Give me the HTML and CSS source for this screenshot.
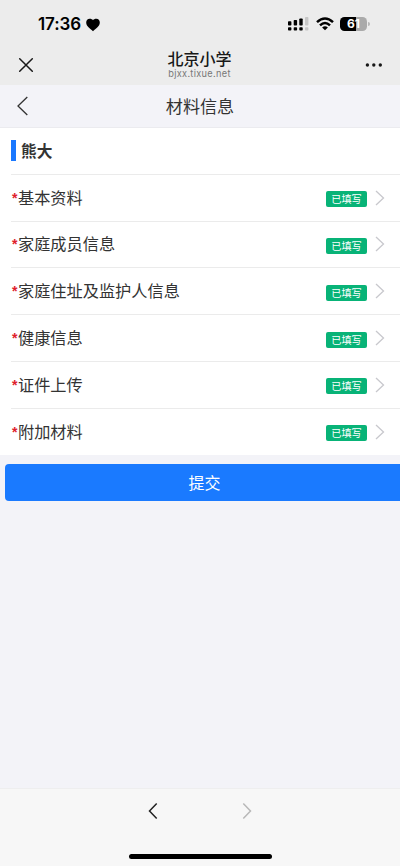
FILE: index.html
```html
<!DOCTYPE html>
<html lang="zh-CN">
<head>
<meta charset="utf-8">
<meta name="viewport" content="width=device-width, initial-scale=1">
<title>材料信息</title>
<link rel="stylesheet" href="styles.css">
</head>
<body>
<header class="top">
  <div class="status">
    <span class="time">17:36</span>
    <svg class="heart" width="14" height="14" viewBox="0 0 14 14"><path d="M7 13.2C3.5 10.5.2 8 .2 4.6.2 2.400 1.700.8 3.600.8 5.200.8 6.400 1.300 7 2.300 7.600 1.300 8.800.8 10.400.8c1.900 0 3.400 1.600 3.400 3.800C13.800 8 10.500 10.500 7 13.200z"/></svg>
    <svg class="signal" width="21" height="14" viewBox="0 0 21 14"><g><rect x="0" y="4.300" width="3.400" height="4.200" rx=".8"/><rect x="5.700" y="3" width="3.400" height="5.500" rx=".8"/><rect x="11.300" y="1.500" width="3.400" height="7" rx=".8"/><rect x="0" y="10.200" width="3.400" height="3.400" rx=".8"/><rect x="5.700" y="10.200" width="3.400" height="3.400" rx=".8"/><rect x="11.300" y="10.200" width="3.400" height="3.400" rx=".8"/></g><g fill="#c6c6c6"><rect x="17" y="0" width="3.400" height="8.500" rx=".8"/><rect x="17" y="10.200" width="3.400" height="3.400" rx=".8"/></g></svg>
    <svg class="wifi" width="18" height="14" viewBox="0 0 18 14"><g fill="none" stroke="#000" stroke-width="2.500"><path d="M1 5.200Q9-2.200 17 5.200"/><path d="M4 8.400Q9 3.700 14 8.400"/></g><path d="M9 13.200 6.100 10.400Q9 7.900 11.900 10.400z"/></svg>
    <div class="battery"><span class="level">61</span></div>
    <span class="cap"></span>
  </div>
  <div class="browser">
    <svg width="16" height="16" viewBox="0 0 16 16" fill="none" stroke="#181818" stroke-width="1.500" stroke-linecap="round"><path d="M1.700 1.700 14.300 14.300M14.300 1.700 1.700 14.300"/></svg>
    <div class="site"><div class="name">北京小学</div><div class="host">bjxx.tixue.net</div></div>
    <svg width="18" height="4" viewBox="0 0 18 4" fill="#181818"><circle cx="2.400" cy="2" r="1.700"/><circle cx="8.800" cy="2" r="1.700"/><circle cx="15.300" cy="2" r="1.700"/></svg>
  </div>
</header>
<nav class="title">
  <svg width="12" height="20" viewBox="0 0 12 20" fill="none" stroke="#333" stroke-width="1.300"><path d="M11.300 1 2 10l9.300 9"/></svg>
  <h1>材料信息</h1>
</nav>
<main>
  <section class="list">
    <div class="row person"><span class="bar"></span><h2>熊大</h2></div>
    <div class="row"><i>*</i><span class="label">基本资料</span><span class="tag">已填写</span><svg class="go" viewBox="0 0 10 16"><path d="M1 1l7.500 7L1 15"/></svg></div>
    <div class="row"><i>*</i><span class="label">家庭成员信息</span><span class="tag">已填写</span><svg class="go" viewBox="0 0 10 16"><path d="M1 1l7.500 7L1 15"/></svg></div>
    <div class="row"><i>*</i><span class="label">家庭住址及监护人信息</span><span class="tag">已填写</span><svg class="go" viewBox="0 0 10 16"><path d="M1 1l7.500 7L1 15"/></svg></div>
    <div class="row"><i>*</i><span class="label">健康信息</span><span class="tag">已填写</span><svg class="go" viewBox="0 0 10 16"><path d="M1 1l7.500 7L1 15"/></svg></div>
    <div class="row"><i>*</i><span class="label">证件上传</span><span class="tag">已填写</span><svg class="go" viewBox="0 0 10 16"><path d="M1 1l7.500 7L1 15"/></svg></div>
    <div class="row"><i>*</i><span class="label">附加材料</span><span class="tag">已填写</span><svg class="go" viewBox="0 0 10 16"><path d="M1 1l7.500 7L1 15"/></svg></div>
  </section>
  <button class="submit">提交</button>
</main>
<footer>
  <div class="history">
    <svg width="10" height="18" viewBox="0 0 10 18" fill="none" stroke="#222" stroke-width="1.500"><path d="M8.700 1.500 1.500 9l7.200 7.500"/></svg>
    <svg width="10" height="18" viewBox="0 0 10 18" fill="none" stroke="#b8b8b8" stroke-width="1.500"><path d="M1.300 1.500 8.500 9l-7.200 7.500"/></svg>
  </div>
  <div class="home"></div>
</footer>
</body>
</html>
```
FILE: styles.css
```css
* { box-sizing: border-box; }
body {
  margin: 0;
  height: 866px;
  display: flex;
  flex-direction: column;
  overflow: hidden;
  background: #f3f3f8;
  color: #333;
  font-family: "Liberation Sans", "Noto Sans CJK SC", sans-serif;
}
svg { display: block; flex: none; }
h1, h2 { margin: 0; }
.top { height: 85px; background: #ececec; flex: none; }
.status {
  display: flex;
  align-items: center;
  height: 45px;
  padding: 3px 0 0 38px;
}
.time {
  width: 44px;
  font: 600 17px/20px Inter, sans-serif;
  letter-spacing: -0.1px;
  color: #000;
}
.heart { margin: 1px 0 0 4px; }
.signal { margin-left: 188px; }
.wifi { margin-left: 7px; }
.battery {
  width: 27px;
  height: 14px;
  margin-left: 6px;
  border-radius: 4.5px;
  background: linear-gradient(90deg, #000 61%, #aaa 61%);
  text-align: center;
}
.level {
  display: block;
  font: 700 12px/14px Inter, sans-serif;
  color: #fff;
}
.cap { width: 1.5px; height: 4px; margin-left: 1px; border-radius: 0 2px 2px 0; background: #b8b8b8; }
.browser {
  display: grid;
  grid-template-columns: 16px 1fr 18px;
  align-items: center;
  height: 39px;
  padding: 0 17px 0 18px;
}
.site { text-align: center; }
.name { font: 500 16px/19px "Noto Sans CJK SC", sans-serif; color: #181818; margin-top: -2px; }
.host { font: 9.2px/10px Inter, sans-serif; letter-spacing: 0.33px; color: #777; margin-top: 1px; }
.title {
  display: grid;
  grid-template-columns: 12px 1fr 12px;
  align-items: center;
  flex: none;
  height: 43px;
  padding: 0 16px;
  border-bottom: 1px solid #ebebef;
}
.title h1 { text-align: center; font: 400 17.1px/24px "Noto Sans CJK SC", sans-serif; }
main { flex: 1; }
.list { background: #fff; }
.row {
  display: flex;
  align-items: center;
  height: 46.8px;
  margin-left: 11px;
  padding-right: 15px;
  border-bottom: 1px solid #ebebeb;
}
.row:last-child { height: 46.2px; border-bottom: 0; }
.row i { width: 7px; padding-left: 1px; font: 700 14px/18px "Liberation Sans", sans-serif; color: #e0202b; }
.bar { width: 5px; height: 21px; margin-right: 5px; background: #1a78ff; }
.person h2 { font: 700 15.7px/24px "Noto Sans CJK SC", sans-serif; }
.label { flex: 1; margin-top: -2px; font: 400 16.2px/24px "Noto Sans CJK SC", sans-serif; }
.tag {
  width: 41px;
  height: 16px;
  margin: 3px 8px 0 0;
  border-radius: 2px;
  background: #08b377;
  color: #fff;
  text-align: center;
  font: 400 10.2px/16px "Noto Sans CJK SC", sans-serif;
}
.go { width: 10px; height: 16px; fill: none; stroke: #c8c8cd; stroke-width: 1.3; }
.submit {
  display: block;
  width: 400px;
  height: 36.5px;
  margin: 9.500px 0 0 4.5px;
  padding: 0 0 2px;
  border: 0;
  border-radius: 4px;
  background: #1a7aff;
  color: #fff;
  font: 400 16px/34px "Noto Sans CJK SC", sans-serif;
}
footer {
  display: flex;
  flex-direction: column;
  align-items: center;
  justify-content: space-between;
  flex: none;
  height: 78px;
  padding: 13px 0 7.5px;
  border-top: 1px solid #eeeeef;
  background: #f7f7f7;
}
.history { display: flex; gap: 84px; }
.home { width: 143px; height: 5px; border-radius: 3px; background: #000; }
```
